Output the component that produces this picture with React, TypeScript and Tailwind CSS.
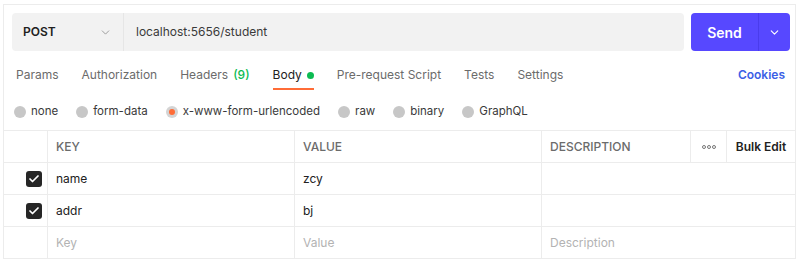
import { Check, ChevronDown } from "lucide-react";

const tabs = [
  { label: "Params" },
  { label: "Authorization" },
  { label: "Headers", count: "(9)" },
  { label: "Body", active: true },
  { label: "Pre-request Script" },
  { label: "Tests" },
  { label: "Settings" },
];

const bodyTypes = [
  "none",
  "form-data",
  "x-www-form-urlencoded",
  "raw",
  "binary",
  "GraphQL",
];

const rows = [
  { key: "name", value: "zcy" },
  { key: "addr", value: "bj" },
];

function Checkbox() {
  return (
    <span className="flex h-4 w-4 items-center justify-center rounded-[3px] bg-[#262626]">
      <Check className="h-3 w-3 text-white" strokeWidth={3.5} />
    </span>
  );
}

export default function App() {
  return (
    <div
      className="min-h-[270px] bg-white pt-[4px] pl-[3px] text-[12px] text-[#212121]"
      style={{ fontFamily: "Inter, 'Noto Sans', sans-serif" }}
    >
      <div className="w-[793px] border-x border-t border-[#ececec]">
        <div className="flex gap-[7px] pt-[8px] pr-[5px] pl-[8px]">
          <div className="flex h-[38px] flex-1 overflow-hidden rounded-[4px] bg-[#f2f2f2]">
            <div className="flex w-[112px] items-center justify-between border-r border-[#e6e6e6] pr-[11px] pl-[11px]">
              <span className="font-semibold text-[#212121]">POST</span>
              <ChevronDown className="h-[13px] w-[13px] text-[#8a8a8a]" strokeWidth={1.5} />
            </div>
            <div className="flex items-center pl-[12px] text-[#3a3a3a]">
              localhost:5656/student
            </div>
          </div>
          <div className="flex h-[38px] w-[99px] overflow-hidden rounded-[4px] bg-[#5748ff] text-white">
            <div className="flex flex-1 items-center justify-center text-[14px] font-semibold">
              Send
            </div>
            <div className="flex w-[32px] items-center justify-center border-l border-[#4a3cec]">
              <ChevronDown className="h-[13px] w-[13px]" strokeWidth={2} />
            </div>
          </div>
        </div>

        <div className="mt-[11px] flex h-[28px] items-stretch pr-[10px] pl-[12px]">
          <div className="flex gap-[23px]">
            {tabs.map((tab) => (
              <div
                key={tab.label}
                className={
                  tab.active
                    ? "flex items-center gap-[5px] border-b-2 border-[#ff6c37] text-[#212121]"
                    : "flex items-center gap-[5px] border-b-2 border-transparent text-[#6b6b6b]"
                }
              >
                <span>{tab.label}</span>
                {tab.count && (
                  <span className="font-medium text-[#0cbb52]">{tab.count}</span>
                )}
                {tab.active && (
                  <span className="h-[7px] w-[7px] rounded-full bg-[#0cbb52]" />
                )}
              </div>
            ))}
          </div>
          <div className="ml-auto flex items-center pb-[2px] font-semibold text-[#3b5fe6]">
            Cookies
          </div>
        </div>

        <div className="flex h-[40px] items-center gap-[18px] pt-[3px] pl-[10px] text-[11.5px]">
          {bodyTypes.map((type) => (
            <div key={type} className="flex items-center gap-[5px] text-[#3a3a3a]">
              {type === "x-www-form-urlencoded" ? (
                <span className="flex h-[12px] w-[12px] items-center justify-center rounded-full bg-[#d4d4d4]">
                  <span className="h-[6px] w-[6px] rounded-full bg-[#ff6c37]" />
                </span>
              ) : (
                <span className="h-[12px] w-[12px] rounded-full bg-[#c7c7c7]" />
              )}
              <span>{type}</span>
            </div>
          ))}
        </div>

        <div className="grid grid-cols-[43px_247px_247px_149px_36px_69px] border-b border-[#ececec]">
          <div className="h-8 border-t border-[#ececec]" />
          <div className="flex h-8 items-center border-t border-l border-[#ececec] pl-[8px] font-medium text-[#6b6b6b]">
            KEY
          </div>
          <div className="flex h-8 items-center border-t border-l border-[#ececec] pl-[8px] font-medium text-[#6b6b6b]">
            VALUE
          </div>
          <div className="flex h-8 items-center border-t border-l border-[#ececec] pl-[8px] font-medium text-[#6b6b6b]">
            DESCRIPTION
          </div>
          <div className="flex h-8 items-center justify-center border-t border-l border-[#ececec] text-[#6b6b6b]">
            <span className="flex gap-[1px]">
              <span className="h-[4px] w-[4px] rounded-full border border-[#777]" />
              <span className="h-[4px] w-[4px] rounded-full border border-[#777]" />
              <span className="h-[4px] w-[4px] rounded-full border border-[#777]" />
            </span>
          </div>
          <div className="flex h-8 items-center justify-center border-t border-l border-[#ececec] font-semibold text-[#212121]">
            Bulk Edit
          </div>

          {rows.map((row) => (
            <div key={row.key} className="contents">
              <div className="flex h-8 items-center justify-end border-t border-[#ececec] pr-[5px]">
                <Checkbox />
              </div>
              <div className="flex h-8 items-center border-t border-l border-[#ececec] pl-[8px]">
                {row.key}
              </div>
              <div className="flex h-8 items-center border-t border-l border-[#ececec] pl-[8px]">
                {row.value}
              </div>
              <div className="col-span-3 h-8 border-t border-l border-[#ececec]" />
            </div>
          ))}

          <div className="h-8 border-t border-[#ececec]" />
          <div className="flex h-8 items-center border-t border-l border-[#ececec] pl-[8px] text-[#b3b3b3]">
            Key
          </div>
          <div className="flex h-8 items-center border-t border-l border-[#ececec] pl-[8px] text-[#b3b3b3]">
            Value
          </div>
          <div className="col-span-3 flex h-8 items-center border-t border-l border-[#ececec] pl-[8px] text-[#b3b3b3]">
            Description
          </div>
        </div>
      </div>
    </div>
  );
}
